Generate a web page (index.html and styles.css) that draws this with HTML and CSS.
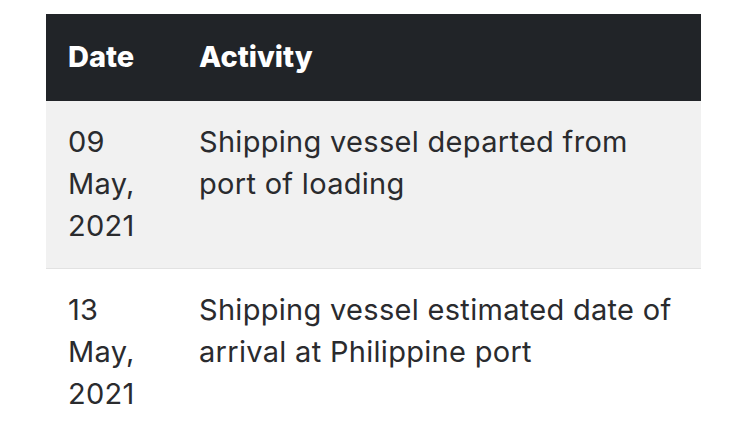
FILE: index.html
```html
<!DOCTYPE html>
<html>
<head>
<meta charset="utf-8">
<link rel="stylesheet" href="styles.css">
</head>
<body>
<table class="timeline">
  <thead>
    <tr><th class="col-date">Date</th><th class="col-act">Activity</th></tr>
  </thead>
  <tbody>
    <tr class="row-alt"><td class="col-date">09 May, 2021</td><td class="col-act">Shipping vessel departed from port of loading</td></tr>
    <tr><td class="col-date">13 May, 2021</td><td class="col-act">Shipping vessel estimated date of arrival at Philippine port</td></tr>
  </tbody>
</table>
</body>
</html>
```
FILE: styles.css
```css
html, body {
  margin: 0;
  padding: 0;
  background: #ffffff;
}
body {
  padding: 14px 0 0 46px;
  font-family: Inter, "Open Sans", sans-serif;
  color: #2a2b2e;
}
.timeline {
  border-collapse: collapse;
  width: 655px;
  table-layout: fixed;
}
.timeline th,
.timeline td {
  text-align: left;
  vertical-align: top;
  font-size: 29px;
  letter-spacing: 0.3px;
  line-height: 42px;
  padding: 20px 22px 21px 22px;
}
.timeline th {
  background: #212428;
  color: #ffffff;
  font-weight: 800;
  letter-spacing: 0;
  padding-top: 22px;
  padding-bottom: 23px;
}
.col-date { width: 87px; }
.row-alt td {
  background: #f1f1f1;
  border-bottom: 1px solid #e2e2e2;
}
```
